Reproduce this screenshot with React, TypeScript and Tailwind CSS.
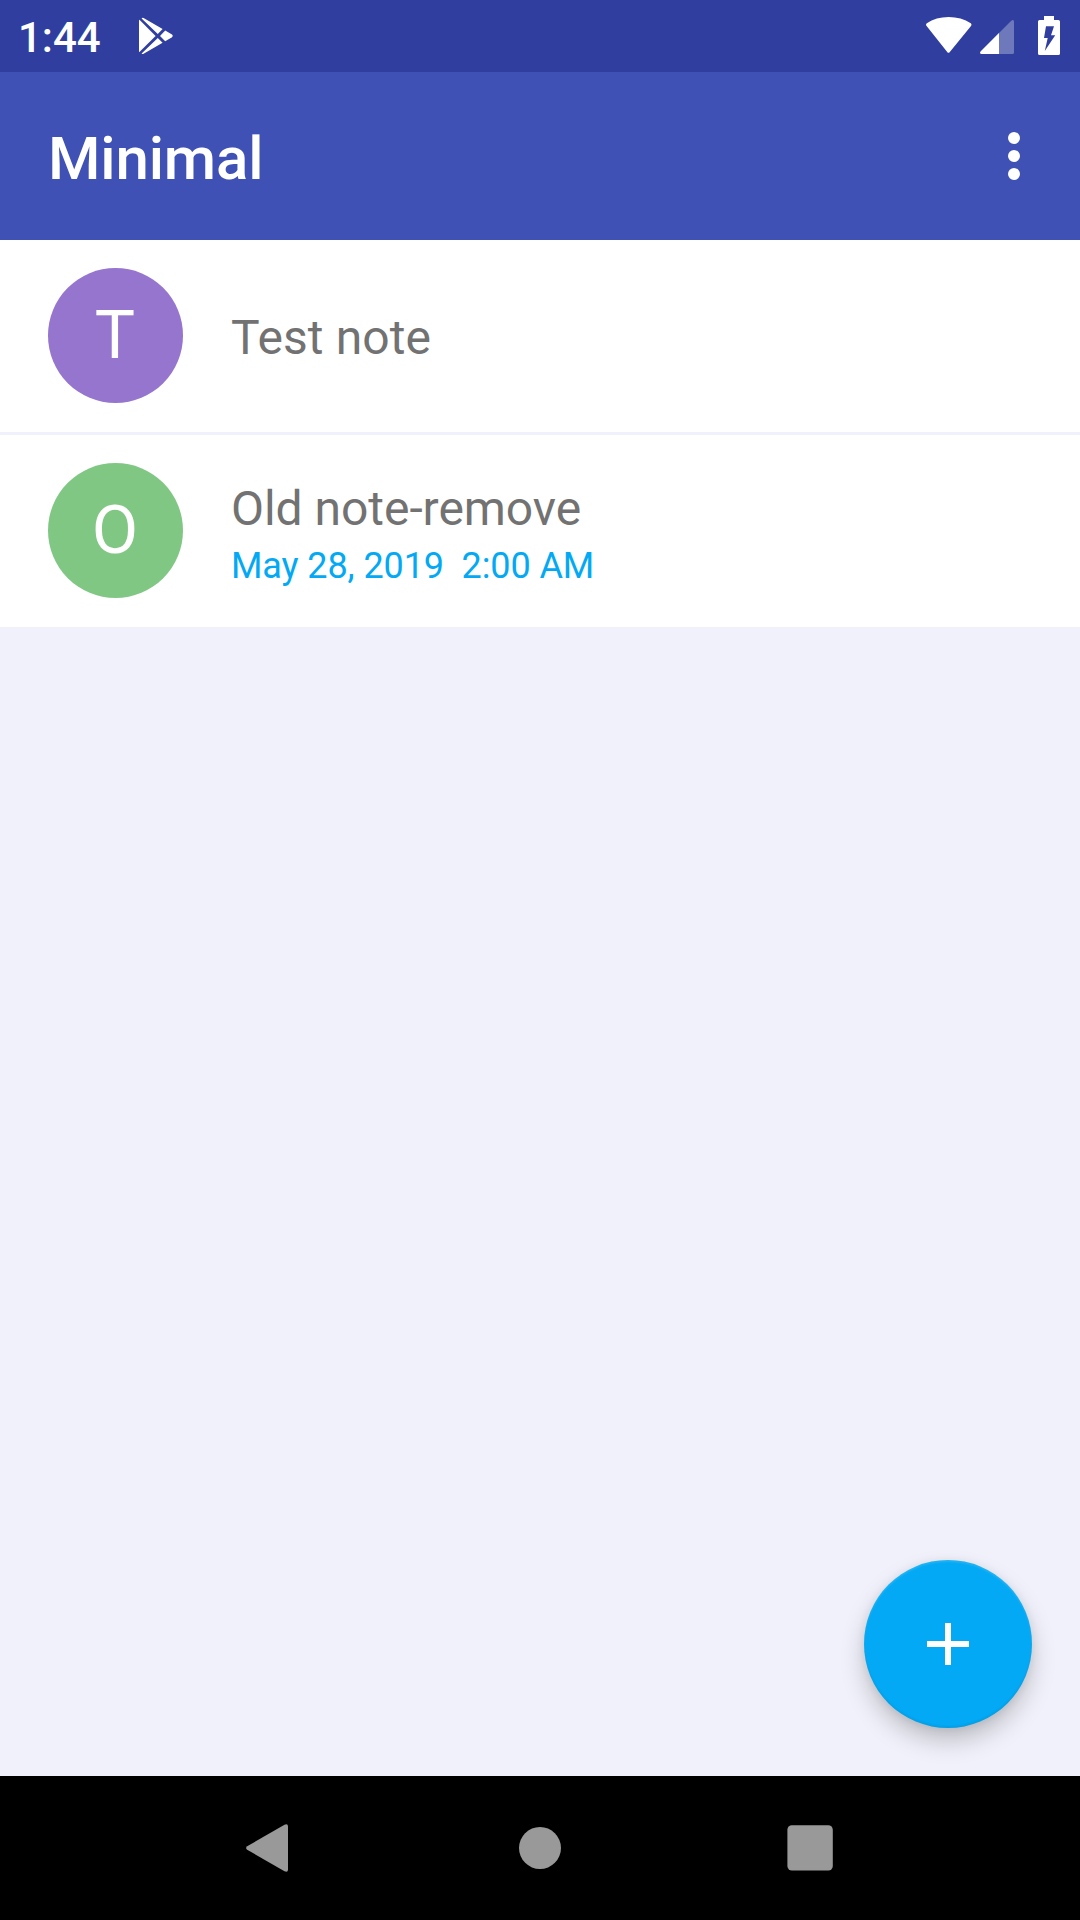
import React from "react";

type Note = { letter: string; title: string; date?: string; color: string; titleTracking: string };

const notes: Note[] = [
  { letter: "T", title: "Test note", color: "bg-[#9575cd]", titleTracking: "tracking-[0.1px]" },
  {
    letter: "O",
    title: "Old note-remove",
    date: "May 28, 2019\u00a0\u00a02:00 AM",
    color: "bg-[#81c784]",
    titleTracking: "tracking-[-0.04px]",
  },
];

function StatusBar() {
  return (
    <div className="flex h-[72px] shrink-0 items-center bg-[#303f9f] pl-[18px] pr-[18px] text-white">
      <span className="w-[118px] pt-[3px] text-[42px] leading-[49px] font-medium">1:44</span>
      <svg className="h-[72px] w-[42px]" viewBox="136 0 42 72" fill="currentColor">
        <path d="M139 20.2 Q139 19.4 139.7 20 L155.6 35.9 L139.7 51.8 Q139 52.4 139 51.6 Z" />
        <path d="M141.6 18.4 Q142.4 17.3 143.6 18 L162.6 29 L157.8 34 Z" />
        <path d="M141.6 53.4 Q142.4 54.5 143.6 53.8 L162.6 42.8 L157.8 37.9 Z" />
        <path d="M160 35.9 L165.2 30.6 L171.6 34.3 Q173.8 35.9 171.6 37.5 L165.2 41.2 Z" />
      </svg>
      <svg className="ml-auto h-[72px] w-[142px]" viewBox="920 0 142 72" fill="currentColor">
        <path d="M926.2 25.6 Q925.6 24.2 926.8 23.3 Q936 17 948.6 17 Q961.3 17 970.8 23.3 Q972 24.3 971.2 25.7 L949.8 52 Q948.5 53.7 947.2 52 Z" />
        <path opacity=".3" d="M981 51 L1011 21 Q1014 18.8 1014 22 V52.4 Q1014 54 1012.4 54 H981.5 Q979 53 981 51 Z" />
        <path d="M980.6 51.4 L999 33 V54 H981.5 Q979.2 53.2 980.6 51.4 Z" />
        <path fillRule="evenodd" d="M1044 16 H1054 V20 H1058.4 Q1060 20 1060 21.6 V53.4 Q1060 55 1058.4 55 H1039.6 Q1038 55 1038 53.4 V21.6 Q1038 20 1039.6 20 H1044 Z M1046 26.2 L1044 38 H1047.7 L1044.8 51 L1055.2 35.2 H1051 L1054 26.2 Z" />
      </svg>
    </div>
  );
}

function AppBar() {
  return (
    <header className="flex h-[168px] shrink-0 items-center justify-between bg-[#3f51b5] pl-12 pr-[60px] text-white">
      <h1 className="pt-[5px] text-[60px] leading-[71px] font-medium tracking-[-0.15px]">Minimal</h1>
      <button aria-label="More options" className="flex flex-col gap-[6px]">
        <span className="size-3 rounded-full bg-white" />
        <span className="size-3 rounded-full bg-white" />
        <span className="size-3 rounded-full bg-white" />
      </button>
    </header>
  );
}

function NoteRow({ note }: { note: Note }) {
  return (
    <li className="flex h-[192px] items-center bg-white px-12">
      <div className={"mb-px flex size-[135px] shrink-0 items-start justify-center rounded-full pt-[27px] text-[67.5px] leading-[80px] text-white " + note.color}>
        <span className="-ml-px">{note.letter}</span>
      </div>
      <div className={"ml-[48px] flex flex-col " + (note.date ? "gap-[5px] pt-[8px]" : "pt-[3px]")}>
        <span className={"text-[48px] leading-[57px] text-[#727272] " + note.titleTracking}>{note.title}</span>
        {note.date && (
          <span className="text-[36px] leading-[48px] tracking-[-0.1px] text-[#03a9f4]">{note.date}</span>
        )}
      </div>
    </li>
  );
}

function NavBar() {
  return (
    <nav className="flex h-36 shrink-0 items-center justify-between bg-black px-[243px] text-[#999999]">
      <svg className="h-[54px] w-[48px]" viewBox="243 1821 48 54" fill="currentColor">
        <path d="M247.2 1846.2 L284.5 1824.7 Q288 1823.2 288 1826.6 V1869.4 Q288 1872.8 284.5 1871.3 L247.2 1849.8 Q245 1848 247.2 1846.2 Z" />
      </svg>
      <span className="size-[42px] rounded-full bg-[#999999]" />
      <svg className="h-[54px] w-[48px] overflow-visible" viewBox="789 1821 48 54" fill="currentColor">
        <rect x="787.4" y="1825.2" width="45.4" height="45.4" rx="4.5" />
      </svg>
    </nav>
  );
}

export default function App() {
  return (
    <div className="flex h-[1920px] w-[1080px] flex-col overflow-hidden bg-[#f0f1fa] font-[Roboto,sans-serif]">
      <StatusBar />
      <AppBar />
      <main className="flex flex-1 flex-col">
        <ul className="flex flex-col gap-[3px]">
          {notes.map((note) => (
            <NoteRow key={note.title} note={note} />
          ))}
        </ul>
        <button
          aria-label="Add note"
          className="mt-auto mr-12 mb-12 flex size-[168px] items-center justify-center self-end rounded-full bg-[#03a9f4] shadow-[0_13px_26px_-2px_rgba(0,0,0,0.24),0_1px_10px_rgba(0,0,0,0.07),inset_0_2px_2px_rgba(255,255,255,0.12),inset_0_-2px_2px_rgba(0,0,0,0.06)]"
        >
          <svg className="size-[42px]" viewBox="0 0 42 42" fill="#fff">
            <path d="M18 0h6v18h18v6H24v18h-6V24H0v-6h18z" />
          </svg>
        </button>
      </main>
      <NavBar />
    </div>
  );
}
